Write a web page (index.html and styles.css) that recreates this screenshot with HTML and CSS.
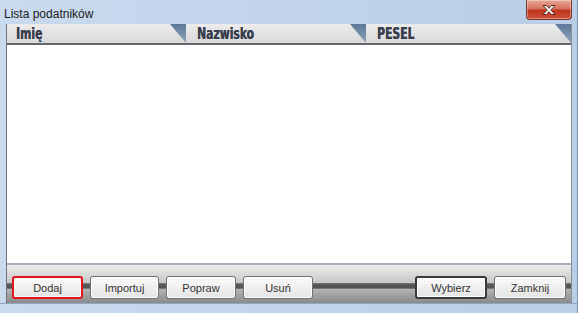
FILE: index.html
```html
<!DOCTYPE html>
<html lang="pl">

<head>
    <meta charset="UTF-8">
    <meta name="viewport" content="width=device-width, initial-scale=1.0">
    <title>Lista podatników</title>
    <link rel="stylesheet" href="styles.css">
</head>

<body>
    <div class="window">
        <div class="titlebar">
            <span class="title">Lista podatników</span>
            <button class="close" type="button" aria-label="Zamknij">
                <svg width="16" height="12" viewBox="0 0 16 12">
                    <path d="M2 1.5h3.5L8 4.3l2.5-2.8H14L9.8 6 14 10.5h-3.5L8 7.7l-2.5 2.8H2L6.2 6z"
                        fill="#fff" stroke="#5a2a22" stroke-width="1" stroke-linejoin="round" />
                </svg>
            </button>
        </div>
        <div class="client">
            <div class="header">
                <div class="col col-first"><span>Imię</span><i class="sep"></i></div>
                <div class="col col-mid"><span>Nazwisko</span><i class="sep"></i></div>
                <div class="col col-last"><span>PESEL</span><i class="sep"></i></div>
            </div>
            <div class="list"></div>
            <div class="toolbar">
                <div class="group">
                    <button class="btn btn-focus" type="button">Dodaj</button>
                    <button class="btn w69" type="button">Importuj</button>
                    <button class="btn" type="button">Popraw</button>
                    <button class="btn" type="button">Usuń</button>
                </div>
                <div class="group">
                    <button class="btn btn-default w72" type="button">Wybierz</button>
                    <button class="btn w72" type="button">Zamknij</button>
                </div>
            </div>
        </div>
        <div class="frame-bottom"></div>
    </div>
</body>

</html>
```

FILE: styles.css
```css
body {
    margin: 0;
    padding: 0;
    font-family: 'Liberation Sans', Arial, sans-serif;
    background-color: #c2d5eb;
}

.window {
    width: 578px;
    height: 313px;
    display: flex;
    flex-direction: column;
    box-sizing: border-box;
    background: linear-gradient(to right, #c9daee, #b9cee7);
    border-right: 1px solid #7d94ae;
}

.titlebar {
    height: 24px;
    display: flex;
    justify-content: space-between;
    align-items: flex-start;
    flex-shrink: 0;
}

.title {
    padding: 7px 0 0 4px;
    font-size: 12px;
    color: #1c1c1c;
}

.close {
    width: 46px;
    height: 20px;
    margin-right: 5px;
    padding: 0;
    border: 1px solid #7b3528;
    border-top: none;
    border-radius: 0 0 4px 4px;
    background: linear-gradient(#e6a797, #d6735e 45%, #c0341d 55%, #cf533a);
    box-shadow: inset 0 0 0 1px rgba(255, 255, 255, 0.35);
    display: flex;
    align-items: center;
    justify-content: center;
}

.client {
    flex: 1;
    margin: 0 5px 0 6px;
    display: flex;
    flex-direction: column;
    border-left: 1px solid #6f747a;
    border-right: 1px solid #8a9098;
    min-height: 0;
}

/* column header */
.header {
    height: 21px;
    display: flex;
    flex-shrink: 0;
    background: linear-gradient(#ececec, #d9d9d9);
    border-bottom: 2px solid #66686b;
    box-sizing: border-box;
}

.col {
    display: flex;
    justify-content: space-between;
    font-family: 'DejaVu Sans Condensed', 'DejaVu Sans', sans-serif;
    font-weight: bold;
    font-size: 15px;
    color: #3a3f4e;
    line-height: 20px;
}

.col span {
    margin-left: 11px;
    transform: scaleX(0.8);
    transform-origin: left center;
    text-shadow: 0.4px 0 0 #3a3f4e;
}

.col-first {
    width: 179px;
}

.col-first span {
    margin-left: 9px;
}

.col-mid {
    width: 180px;
}

.col-last {
    flex: 1;
}

.sep {
    width: 16px;
    background: linear-gradient(#5b7898, #8ea4bb);
    clip-path: polygon(0 0, 100% 0, 100% 100%);
}

.list {
    flex: 1;
    background-color: #fff;
    border-bottom: 2px solid #a4afbd;
}

/* button strip */
.toolbar {
    height: 38px;
    flex-shrink: 0;
    box-sizing: border-box;
    padding: 11px 5px 0 5px;
    display: flex;
    justify-content: space-between;
    align-items: flex-start;
    background:
        linear-gradient(transparent 18px, #7a7a7a 18px, #555 20px, #555 23px, #767676 23px, #767676 24px, transparent 24px),
        linear-gradient(#ececec, #c9c9c9 45%, #8a8a8a);
}

.group {
    display: flex;
    gap: 7px;
}

.btn {
    width: 70px;
    height: 23px;
    padding: 0;
    box-sizing: border-box;
    border: 1px solid #707070;
    border-radius: 3px;
    background: linear-gradient(#fbfbfb, #efefef 50%, #e4e4e4);
    box-shadow: inset 0 0 0 1px #fff;
    font-family: 'Liberation Sans', Arial, sans-serif;
    font-size: 11px;
    color: #333;
}

.w69 {
    width: 69px;
}

.w72 {
    width: 72px;
}

.btn-focus {
    width: 71px;
    border: 2px solid #e2151d;
    box-shadow: inset 0 0 0 1px #f4f4f4;
}

.btn-default {
    border: 2px solid #3a3a3a;
}

.frame-bottom {
    height: 10px;
    flex-shrink: 0;
    border-top: 1px solid #8ea6c2;
    box-sizing: border-box;
}
```
